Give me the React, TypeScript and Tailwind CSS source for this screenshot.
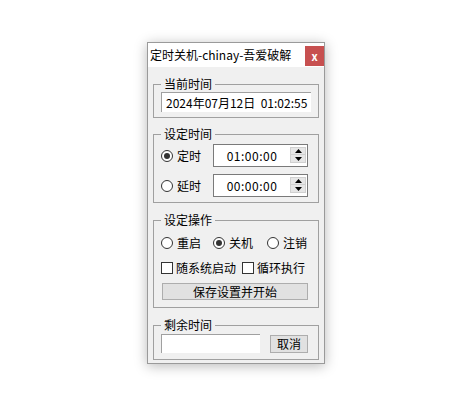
import React from "react";

const font = "font-['Noto_Sans_CJK_SC','Liberation_Sans',sans-serif]";

function Radio({ checked, label }: { checked?: boolean; label: string }) {
  return (
    <div className="flex items-center h-[16px]">
      <span className="w-[12px] h-[12px] rounded-full border border-[#333333] bg-white flex items-center justify-center shrink-0">
        {checked && <span className="w-[6px] h-[6px] rounded-full bg-[#333333]" />}
      </span>
      <span className="ml-[4px] text-[12px] leading-[16px] text-black whitespace-nowrap">{label}</span>
    </div>
  );
}

function Check({ label }: { label: string }) {
  return (
    <div className="flex items-center h-[16px]">
      <span className="w-[12px] h-[12px] border border-[#333333] bg-white shrink-0" />
      <span className="ml-[3px] text-[12px] leading-[16px] text-black whitespace-nowrap">{label}</span>
    </div>
  );
}

function Spin({ value }: { value: string }) {
  return (
    <div className="w-[95px] h-[23px] border border-[#7a7a7a] bg-white flex">
      <div className="flex-1 flex items-center justify-center text-[12px] leading-[16px] tracking-[0.5px] text-black">
        {value}
      </div>
      <div className="w-[16px] mr-[1px] mt-[2px] mb-[3px] flex flex-col">
        <div className="h-[8px] bg-[#e6e6e6] border border-[#d0d0d0] flex items-center justify-center">
          <svg width="7" height="4" viewBox="0 0 7 4"><polygon points="3.5,0 7,4 0,4" fill="#000" /></svg>
        </div>
        <div className="h-[8px] bg-[#e6e6e6] border border-[#d0d0d0] border-t-0 flex items-center justify-center">
          <svg width="7" height="4" viewBox="0 0 7 4"><polygon points="0,0 7,0 3.5,4" fill="#000" /></svg>
        </div>
      </div>
    </div>
  );
}

function Group({ title, className, children }: { title: string; className?: string; children: React.ReactNode }) {
  return (
    <fieldset className={`ml-[5px] w-[166px] border border-[#a0a0a0] px-[7px] ${className ?? ""}`}>
      <legend className="px-[3px] text-[12px] leading-[16px] text-black">{title}</legend>
      {children}
    </fieldset>
  );
}

export default function App() {
  return (
    <div className={`w-[468px] h-[394px] bg-white ${font}`}>
      <div className="pt-[42px] pl-[147px]">
        <div className="w-[178px] border border-[#9a9a9a] bg-[#f0f0f0] shadow-[0_2px_12px_rgba(0,0,0,0.28)]">
          {/* title bar */}
          <div className="h-[24px] bg-white flex items-start">
            <div className="flex-1 pl-[2px] pt-[4px] text-[12px] leading-[16px] text-black whitespace-nowrap">
              定时关机-chinay-吾爱破解
            </div>
            <div className="mt-[3px] w-[19px] h-[20px] bg-[#c75050] flex items-center justify-center text-white text-[11px] font-bold leading-none">
              x
            </div>
          </div>

          <div className="pt-[9px] pb-[3px]">
            <Group title="当前时间" className="pb-[5px]">
              <div className="w-[150px] h-[20px] bg-white border-t border-l border-[#a0a0a0] pl-[4px] flex items-center text-[12px] leading-[16px] text-black whitespace-pre">
                {"2024年07月12日  01:02:55"}
              </div>
            </Group>

            <Group title="设定时间" className="mt-[8px] pb-[5px]">
              <div className="mt-[2px] flex items-center h-[23px]">
                <div className="w-[52px]">
                  <Radio checked label="定时" />
                </div>
                <Spin value="01:00:00" />
              </div>
              <div className="mt-[7px] flex items-center h-[23px]">
                <div className="w-[52px]">
                  <Radio label="延时" />
                </div>
                <Spin value="00:00:00" />
              </div>
            </Group>

            <Group title="设定操作" className="mt-[9px] pb-[7px]">
              <div className="mt-[7px] flex items-center">
                <div className="w-[52px]">
                  <Radio label="重启" />
                </div>
                <div className="w-[54px]">
                  <Radio checked label="关机" />
                </div>
                <Radio label="注销" />
              </div>
              <div className="mt-[9px] flex items-center">
                <div className="w-[81px]">
                  <Check label="随系统启动" />
                </div>
                <Check label="循环执行" />
              </div>
              <div className="mt-[7px] ml-[1px] w-[146px] h-[17px] bg-[#e1e1e1] border border-[#adadad] flex items-center justify-center text-[12px] leading-[16px] text-black">
                保存设置并开始
              </div>
            </Group>

            <Group title="剩余时间" className="mt-[9px] pb-[6px]">
              <div className="mt-[1px] flex items-start">
                <div className="w-[99px] h-[19px] bg-white border-t border-l border-[#a0a0a0]" />
                <div className="ml-[10px] mt-[1px] w-[38px] h-[18px] bg-[#e1e1e1] border border-[#adadad] flex items-center justify-center text-[12px] leading-[16px] text-black">
                  取消
                </div>
              </div>
            </Group>
          </div>
        </div>
      </div>
    </div>
  );
}
